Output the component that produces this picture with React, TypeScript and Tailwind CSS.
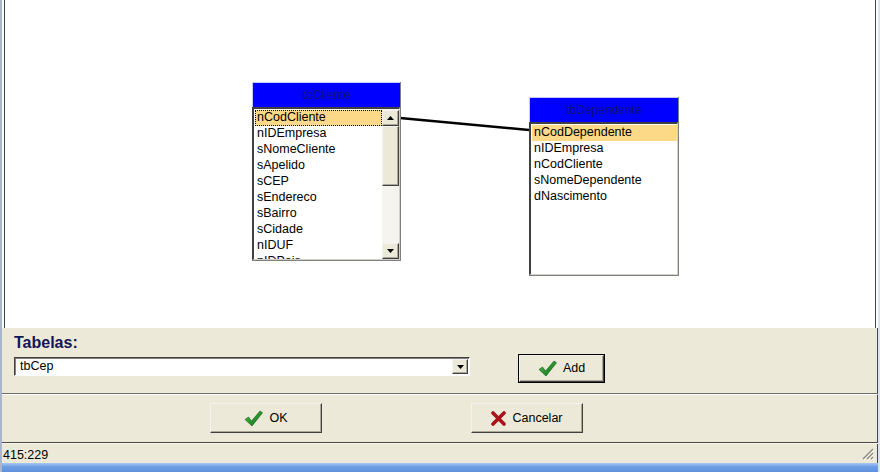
import React from "react";

const clienteFields = [
  "nCodCliente",
  "nIDEmpresa",
  "sNomeCliente",
  "sApelido",
  "sCEP",
  "sEndereco",
  "sBairro",
  "sCidade",
  "nIDUF",
  "nIDPais",
];

const dependenteFields = [
  "nCodDependente",
  "nIDEmpresa",
  "nCodCliente",
  "sNomeDependente",
  "dNascimento",
];

function CheckIcon() {
  return (
    <svg width="19" height="17" viewBox="0 0 19 17">
      <defs>
        <linearGradient id="chk" x1="0" y1="0" x2="1" y2="1">
          <stop offset="0" stopColor="#4cc24c" />
          <stop offset="1" stopColor="#0a6a12" />
        </linearGradient>
      </defs>
      <path d="M1 9.5 L4.5 7 L7.5 11 L16 1 L18.5 2.8 L8 16 Z" fill="url(#chk)" stroke="#0b5a10" strokeWidth="0.6" />
    </svg>
  );
}

function XIcon() {
  return (
    <svg width="15" height="15" viewBox="0 0 15 15">
      <path d="M2 2 L13 13 M13 2 L2 13" stroke="#a8121a" strokeWidth="3.6" strokeLinecap="round" />
    </svg>
  );
}

function Arrow({ dir }: { dir: "up" | "down" }) {
  return (
    <svg width="7" height="4" viewBox="0 0 7 4">
      {dir === "up" ? <path d="M3.5 0 L7 4 L0 4 Z" fill="#000" /> : <path d="M0 0 L7 0 L3.5 4 Z" fill="#000" />}
    </svg>
  );
}

function Bevel({ className = "", children }: { className?: string; children?: React.ReactNode }) {
  return (
    <div
      className={`flex items-center justify-center bg-[#ece9d8] border border-t-[#f4f3ee] border-l-[#f4f3ee] border-r-[#404040] border-b-[#404040] shadow-[inset_-1px_-1px_0_#aca899] ${className}`}
    >
      {children}
    </div>
  );
}

function Button({
  children,
  focused,
  className = "",
}: {
  children: React.ReactNode;
  focused?: boolean;
  className?: string;
}) {
  return (
    <div className={`${focused ? "border border-black" : ""} ${className}`}>
      <Bevel className="w-full h-full gap-[6px] text-[12.5px] text-black">{children}</Bevel>
    </div>
  );
}

function TableBox({
  title,
  fields,
  scroll,
  className,
}: {
  title: string;
  fields: string[];
  scroll?: boolean;
  className: string;
}) {
  return (
    <div className={`absolute flex flex-col border-r border-b border-[#808080] ${className}`}>
      <div className="h-[25px] shrink-0 bg-[#0000ff] border-t border-l border-[#c8c8ff] flex items-center justify-center text-[12px] text-[#10107a]">
        {title}
      </div>
      <div className="flex-1 min-h-0 flex bg-white border-t-2 border-l-2 border-t-[#404040] border-l-[#404040] border-r border-b border-r-[#d4d0c8] border-b-[#d4d0c8]">
        <div className="flex-1 min-w-0 overflow-hidden pt-[1px] pl-[1px]">
          {fields.map((f, i) => (
            <div
              key={f}
              className={`h-[16px] leading-[15px] pl-[2px] text-[12.5px] text-black whitespace-nowrap ${
                i === 0 ? "bg-[#fcd987]" : ""
              } ${i === 0 && scroll ? "outline outline-1 outline-dotted outline-offset-[-1px] outline-black" : ""}`}
            >
              {f}
            </div>
          ))}
        </div>
        {scroll && (
          <div className="w-[17px] shrink-0 flex flex-col bg-[#f5f4ef] pt-[1px]">
            <Bevel className="h-[16px] shrink-0">
              <Arrow dir="up" />
            </Bevel>
            <Bevel className="h-[60px] shrink-0" />
            <div className="flex-1" />
            <Bevel className="h-[16px] shrink-0">
              <Arrow dir="down" />
            </Bevel>
          </div>
        )}
      </div>
    </div>
  );
}

export default function App() {
  return (
    <div className="w-[880px] h-[472px] overflow-hidden flex flex-col bg-[#ece9d8] border-l-2 border-l-[#a9b6cb] border-r-2 border-r-[#dbe3ef] font-['Liberation_Sans',Arial,sans-serif]">
      <div className="h-[328px] shrink-0 bg-white flex">
        <div className="relative flex-1 ml-[2px] mr-[2px] border-l border-r border-[#3f4752] bg-white">
          <svg className="absolute left-0 top-0" width="872" height="328">
            <line x1="395" y1="118" x2="524" y2="130" stroke="#000" strokeWidth="2.4" />
          </svg>
          <TableBox title="tbCliente" fields={clienteFields} scroll className="left-[247px] top-[82px] w-[149px] h-[179px]" />
          <TableBox title="tbDependente" fields={dependenteFields} className="left-[524px] top-[97px] w-[150px] h-[179px]" />
        </div>
      </div>

      <div className="h-[65px] shrink-0 flex pl-[12px] border-r border-r-[#3f4752]">
        <div className="flex flex-col pt-[5px]">
          <div className="h-[20px] leading-[20px] text-[16px] font-bold text-[#14145a]">Tabelas:</div>
          <div className="mt-[4px] w-[456px] h-[19px] flex bg-white border-t border-l border-t-[#404040] border-l-[#404040] border-r border-b border-r-white border-b-white shadow-[inset_1px_1px_0_#808080]">
            <div className="flex-1 pl-[5px] text-[12.5px] leading-[17px] text-black">tbCep</div>
            <Bevel className="w-[16px] h-[15px] mt-[1px] mr-[1px]">
              <Arrow dir="down" />
            </Bevel>
          </div>
        </div>
        <Button focused className="ml-[48px] mt-[26px] w-[87px] h-[29px]">
          <CheckIcon />
          <span>Add</span>
        </Button>
      </div>

      <div className="h-[1px] shrink-0 bg-[#6f6e66]" />

      <div className="h-[48px] shrink-0 flex pl-[208px] pt-[8px] border-t border-t-white border-r border-r-[#3f4752]">
        <Button className="w-[112px] h-[30px]">
          <CheckIcon />
          <span>OK</span>
        </Button>
        <Button className="ml-[149px] w-[112px] h-[30px]">
          <XIcon />
          <span>Cancelar</span>
        </Button>
      </div>

      <div className="h-[1px] shrink-0 bg-[#4a4a44]" />
      <div className="h-[1px] shrink-0 bg-[#f8f7f2]" />

      <div className="h-[19px] shrink-0 flex items-center justify-between pl-[1px] pr-[3px] border-r border-r-[#3f4752]">
        <span className="pt-[3px] text-[12.5px] text-black leading-[16px]">415:229</span>
        <svg width="12" height="12" viewBox="0 0 12 12">
          <path d="M11 1 L1 11 M11 5 L5 11 M11 9 L9 11" stroke="#8c8a80" strokeWidth="1.4" />
          <path d="M12 2 L2 12 M12 6 L6 12 M12 10 L10 12" stroke="#ffffff" strokeWidth="0.8" />
        </svg>
      </div>

      <div className="h-[9px] shrink-0 bg-[linear-gradient(#a9c8f2,#6f9fe4_40%,#5c8fdc)]" />
    </div>
  );
}
